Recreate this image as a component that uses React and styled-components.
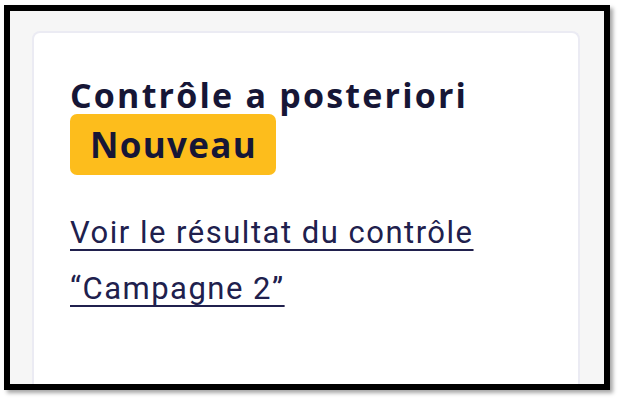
import React from "react";
import styled, { createGlobalStyle } from "styled-components";

const Global = createGlobalStyle`
  html, body { margin: 0; padding: 0; background: #ffffff; }
  body { width: 624px; height: 404px; overflow: hidden; }
`;

const Stage = styled.div`
  padding: 5px 0 0 4px;
`;

const Frame = styled.div`
  box-sizing: border-box;
  width: 606px;
  height: 385px;
  border: 6px solid #000;
  background: #f6f6f6;
  box-shadow: 3px 3px 4px rgba(0, 0, 0, 0.35);
  padding: 20px 24px 0 22px;
  display: flex;
  flex-direction: column;
`;

const Card = styled.div`
  box-sizing: border-box;
  height: 354px;
  background: #ffffff;
  border: 2px solid #ebebf3;
  border-bottom: none;
  border-radius: 8px 8px 0 0;
  padding: 42px 36px 0 36px;
  display: flex;
  flex-direction: column;
  align-items: flex-start;
`;

const Title = styled.h3`
  margin: 0;
  font-family: "Open Sans", "Noto Sans", sans-serif;
  font-weight: 700;
  font-size: 34px;
  line-height: 40px;
  letter-spacing: 2.2px;
  color: #161636;
`;

const Badge = styled.span`
  display: inline-flex;
  align-items: center;
  height: 61px;
  margin-top: -1px;
  padding: 0 19px 0 20px;
  border-radius: 7px;
  background: #fdbd1c;
  font-family: "Open Sans", "Noto Sans", sans-serif;
  font-weight: 700;
  font-size: 35px;
  letter-spacing: 1.3px;
  color: #161636;
`;

const Link = styled.a`
  margin-top: 30px;
  font-family: Roboto, "Liberation Sans", sans-serif;
  font-size: 31px;
  line-height: 56px;
  letter-spacing: 1.5px;
  color: #20204d;
  text-decoration: underline;
  text-decoration-thickness: 2px;
  text-underline-offset: 6px;
  max-width: 430px;
`;

export default function App() {
  return (
    <>
      <Global />
      <Stage>
        <Frame>
          <Card>
            <Title>Contrôle a posteriori</Title>
            <Badge>Nouveau</Badge>
            <Link href="#">Voir le résultat du contrôle “Campagne 2”</Link>
          </Card>
        </Frame>
      </Stage>
    </>
  );
}
